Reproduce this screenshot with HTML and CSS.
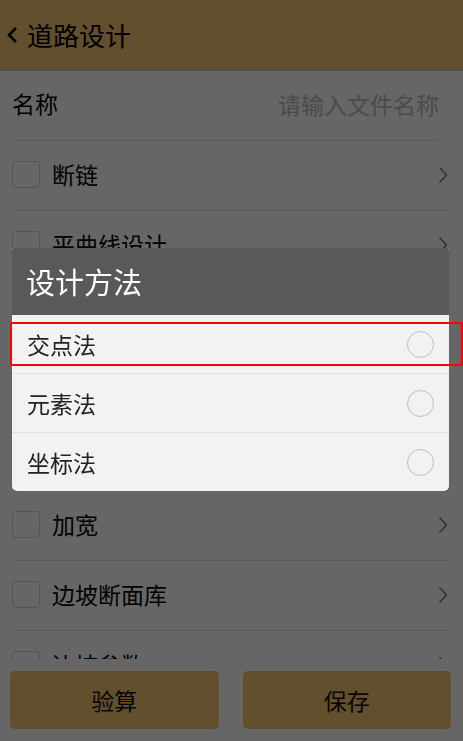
FILE: index.html
```html
<!DOCTYPE html>
<html lang="zh">
<head>
<meta charset="utf-8">
<title>道路设计</title>
<link rel="stylesheet" href="styles.css">
</head>
<body>
<div class="page">
  <header class="header">
    <svg class="back" width="12" height="18" viewBox="0 0 12 18"><path d="M10 2 L3 9 L10 16" fill="none" stroke="#000" stroke-width="2.6"/></svg>
    <span class="title">道路设计</span>
  </header>
  <div class="list">
    <div class="row name-row">
      <span class="label">名称</span>
      <span class="placeholder">请输入文件名称</span>
    </div>
    <div class="row"><span class="check"></span><span class="label">断链</span><svg class="chev" width="10" height="18" viewBox="0 0 10 18"><path d="M1.5 1.5 L8.5 9 L1.5 16.5" fill="none" stroke="#808080" stroke-width="1.6"/></svg></div>
    <div class="row"><span class="check"></span><span class="label">平曲线设计</span><svg class="chev" width="10" height="18" viewBox="0 0 10 18"><path d="M1.5 1.5 L8.5 9 L1.5 16.5" fill="none" stroke="#808080" stroke-width="1.6"/></svg></div>
    <div class="row"><span class="check"></span><span class="label">纵断面设计</span><svg class="chev" width="10" height="18" viewBox="0 0 10 18"><path d="M1.5 1.5 L8.5 9 L1.5 16.5" fill="none" stroke="#808080" stroke-width="1.6"/></svg></div>
    <div class="row"><span class="check"></span><span class="label">横断面设计</span><svg class="chev" width="10" height="18" viewBox="0 0 10 18"><path d="M1.5 1.5 L8.5 9 L1.5 16.5" fill="none" stroke="#808080" stroke-width="1.6"/></svg></div>
    <div class="row"><span class="check"></span><span class="label">超高</span><svg class="chev" width="10" height="18" viewBox="0 0 10 18"><path d="M1.5 1.5 L8.5 9 L1.5 16.5" fill="none" stroke="#808080" stroke-width="1.6"/></svg></div>
    <div class="row"><span class="check"></span><span class="label">加宽</span><svg class="chev" width="10" height="18" viewBox="0 0 10 18"><path d="M1.5 1.5 L8.5 9 L1.5 16.5" fill="none" stroke="#808080" stroke-width="1.6"/></svg></div>
    <div class="row"><span class="check"></span><span class="label">边坡断面库</span><svg class="chev" width="10" height="18" viewBox="0 0 10 18"><path d="M1.5 1.5 L8.5 9 L1.5 16.5" fill="none" stroke="#808080" stroke-width="1.6"/></svg></div>
    <div class="row"><span class="check"></span><span class="label">边坡参数</span><svg class="chev" width="10" height="18" viewBox="0 0 10 18"><path d="M1.5 1.5 L8.5 9 L1.5 16.5" fill="none" stroke="#808080" stroke-width="1.6"/></svg></div>
  </div>
  <div class="bottom">
    <button class="btn">验算</button>
    <button class="btn">保存</button>
  </div>
</div>
<div class="mask"></div>
<div class="dialog">
  <div class="dlg-title">设计方法</div>
  <div class="opt"><span>交点法</span><span class="radio"></span></div>
  <div class="opt"><span>元素法</span><span class="radio"></span></div>
  <div class="opt"><span>坐标法</span><span class="radio"></span></div>
</div>
<div class="highlight"></div>
</body>
</html>
```

FILE: styles.css
```css
* { box-sizing: border-box; }
html, body {
  margin: 0;
  padding: 0;
  width: 463px;
  height: 741px;
  overflow: hidden;
  font-family: "Noto Sans CJK SC", "Noto Sans", sans-serif;
  background: #fff;
}
.page {
  display: flex;
  flex-direction: column;
  height: 741px;
}
.header {
  height: 71px;
  flex: none;
  background: #f2c573;
  border-bottom: 2px solid #c8c8c8;
  display: flex;
  align-items: center;
  padding-left: 6px;
  gap: 9px;
}
.back { margin-top: 1px; }
.title {
  font-size: 26px;
  color: #000;
  line-height: 1;
}
.list {
  height: 588px;
  flex: none;
  overflow: hidden;
}
.row {
  height: 70px;
  margin: 0 15px 0 12px;
  border-bottom: 1px solid #e0e0e0;
  display: flex;
  align-items: center;
}
.name-row {
  margin-left: 12px;
  margin-right: 24px;
  justify-content: space-between;
  padding-bottom: 2px;
}
.label {
  font-size: 23px;
  color: #000;
  line-height: 1;
}
.placeholder {
  font-size: 23px;
  color: #bbbbbb;
  line-height: 1;
}
.check {
  width: 28px;
  height: 27px;
  border: 1px solid #d4d4d4;
  border-radius: 3px;
  margin-right: 12px;
  margin-top: -3px;
  flex: none;
}
.row .label { flex: 1; margin-top: -3px; }
.chev { flex: none; margin-top: -2px; }
.bottom {
  flex: 1;
  display: flex;
  gap: 24px;
  padding: 12px 12px 0 10px;
}
.btn {
  flex: 1;
  height: 58px;
  border: none;
  border-radius: 5px;
  background: #f2c573;
  font-family: inherit;
  font-size: 23px;
  color: #111;
}
.mask {
  position: fixed;
  inset: 0;
  background: rgba(0, 0, 0, 0.6);
}
.dialog {
  position: fixed;
  left: 12px;
  top: 248px;
  width: 437px;
  border-radius: 2px 2px 5px 5px;
  overflow: hidden;
  background: #f2f2f2;
}
.dlg-title {
  height: 67px;
  background: #595959;
  color: #fff;
  font-size: 29px;
  display: flex;
  align-items: center;
  padding-left: 14px;
  padding-bottom: 2px;
}
.opt {
  height: 59px;
  display: flex;
  align-items: center;
  justify-content: space-between;
  padding: 0 15px 0 15px;
  font-size: 23px;
  color: #222;
  border-top: 1px solid #e2e2e2;
}
.dlg-title + .opt { border-top: none; height: 58px; }
.radio {
  width: 27px;
  height: 27px;
  border-radius: 50%;
  border: 1.5px solid #bdbdbd;
}
.highlight {
  position: fixed;
  left: 10px;
  top: 322px;
  width: 453px;
  height: 44px;
  border: 2px solid #ff0000;
}
```
